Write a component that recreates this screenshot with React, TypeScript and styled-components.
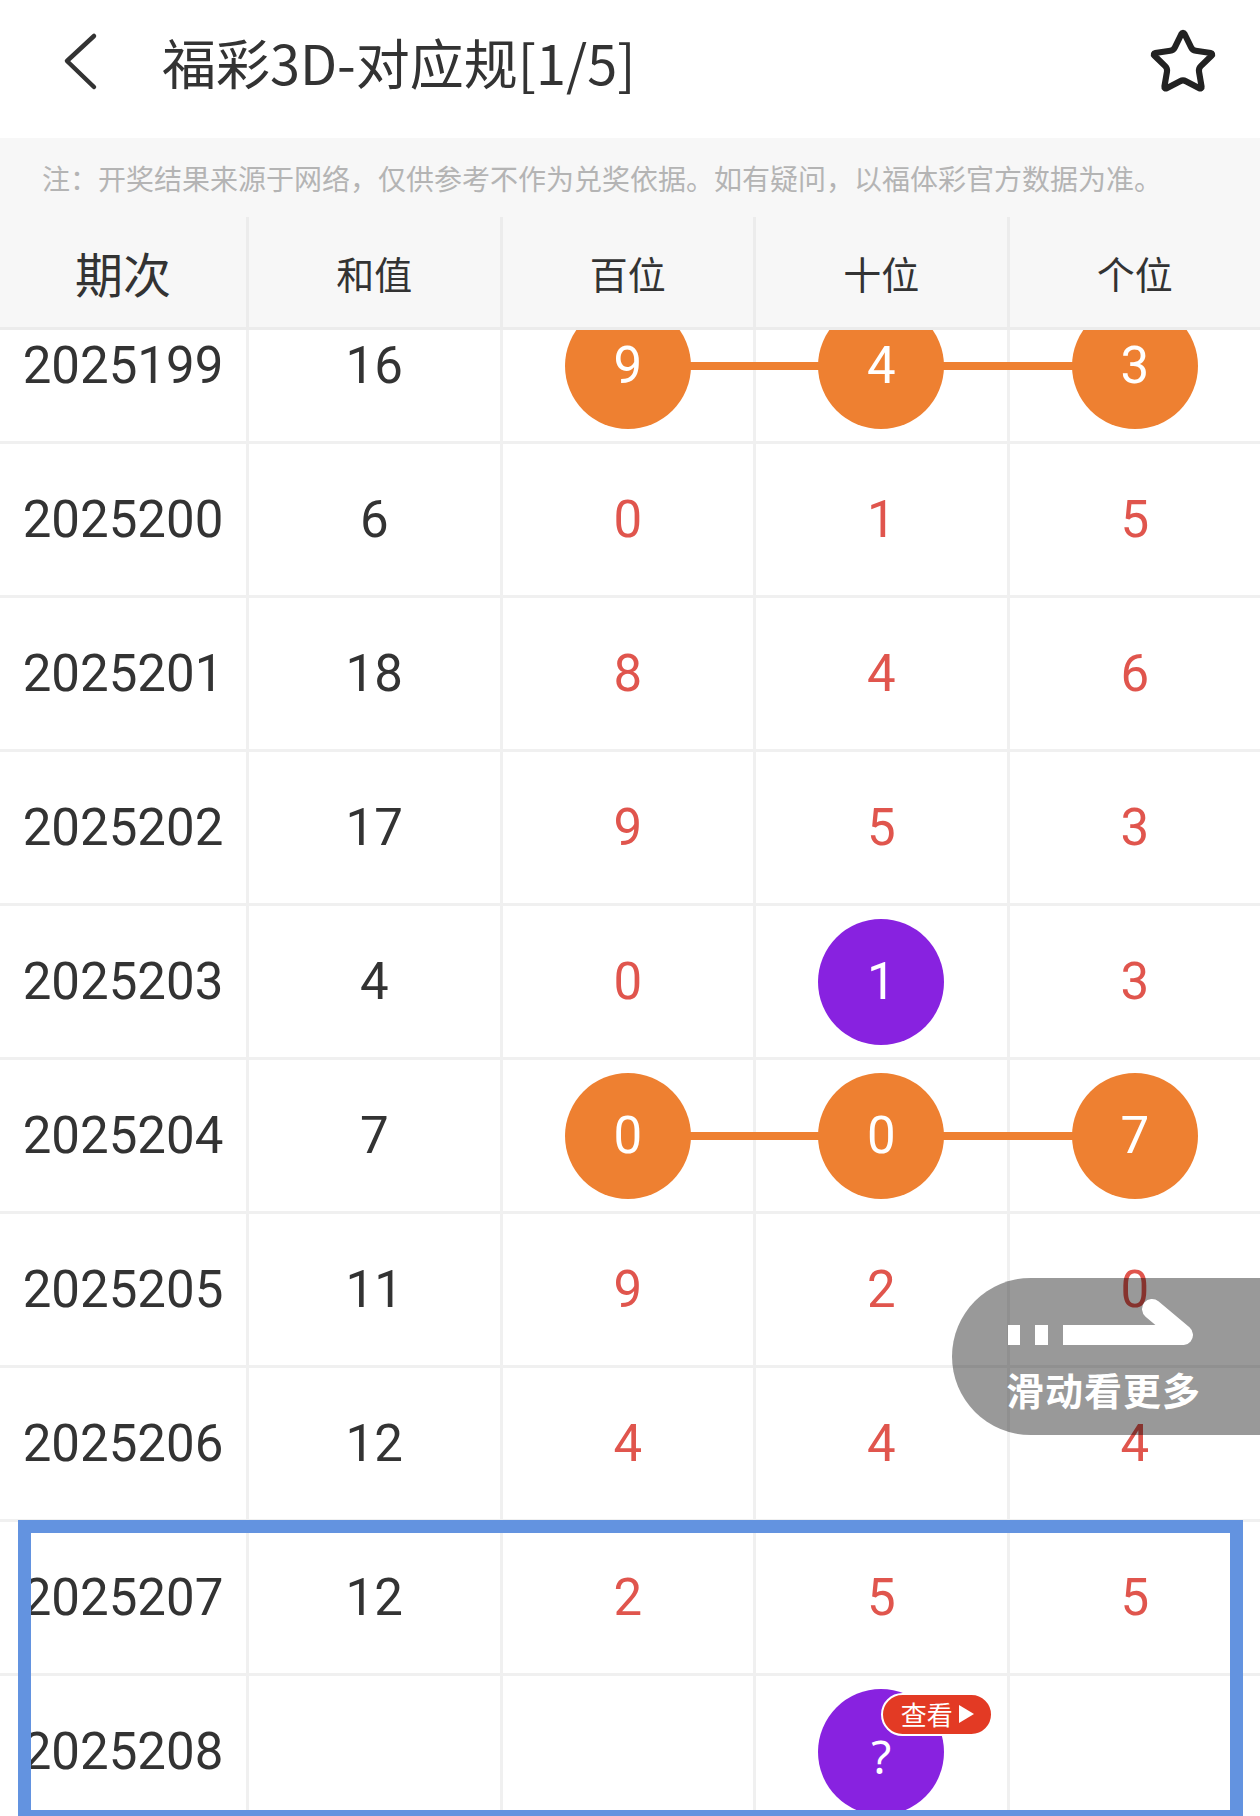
import React from "react";
import styled, { createGlobalStyle, css } from "styled-components";
import { Star } from "lucide-react";

const GlobalStyle = createGlobalStyle`
  html, body { margin: 0; padding: 0; background: #ffffff; }
  body { font-family: "Noto Sans CJK SC", "Noto Sans", sans-serif; }
  * { box-sizing: border-box; }
`;

const ORANGE = "#ee8031";
const PURPLE = "#8822e0";
const RED = "#e0554d";
const LINE = "#f0f0f0";

const Page = styled.div`
  width: 1260px;
  height: 1816px;
  overflow: hidden;
  background: #fff;
  display: flex;
  flex-direction: column;
`;

const NavBar = styled.header`
  height: 138px;
  flex: none;
  display: flex;
  align-items: center;
  padding: 0 42px 14px 62px;
  background: #fff;
`;

const BackButton = styled.button`
  border: 0;
  background: none;
  padding: 0;
  width: 40px;
  height: 62px;
  display: flex;
  color: #333;
`;

const Title = styled.h1`
  margin: 0 0 0 60px;
  font-family: "Noto Sans CJK SC", sans-serif;
  font-weight: 400;
  font-size: 54px;
  line-height: 1;
  color: #333;
  flex: 1;
`;

const StarButton = styled.button`
  border: 0;
  background: none;
  padding: 0;
  display: flex;
  color: #222;
`;

const GraySection = styled.div`
  background: #f7f7f7;
  flex: none;
`;

const Note = styled.p`
  margin: 0;
  height: 79px;
  display: flex;
  align-items: center;
  padding-left: 42px;
  font-size: 28px;
  color: #b4b4b4;
  white-space: nowrap;
`;

const gridCols = css`
  display: grid;
  grid-template-columns: 246px repeat(4, 1fr);
`;

const HeadRow = styled.div`
  ${gridCols};
  height: 113px;
  border-bottom: 3px solid #ececec;
`;

const HeadCell = styled.div<{ $big?: boolean }>`
  display: flex;
  align-items: center;
  justify-content: center;
  font-size: ${(p) => (p.$big ? "48px" : "38px")};
  color: #333;
  & + & {
    border-left: 3px solid #ececec;
  }
`;

const Body = styled.div`
  position: relative;
  flex: 1;
  overflow: hidden;
`;

const Rows = styled.div`
  margin-top: -40px;
`;

const Row = styled.div`
  ${gridCols};
  height: 154px;
  border-bottom: 3px solid ${LINE};
`;

type Link = "start" | "mid" | "end" | undefined;

const Cell = styled.div<{ $link?: Link }>`
  position: relative;
  display: flex;
  align-items: center;
  justify-content: center;
  font-family: Roboto, "Noto Sans", sans-serif;
  font-size: 51px;
  color: #333;
  & + & {
    border-left: 3px solid ${LINE};
  }
  ${(p) =>
    p.$link &&
    css`
      &::before {
        content: "";
        position: absolute;
        top: 50%;
        height: 8px;
        margin-top: -4px;
        background: ${ORANGE};
        left: ${p.$link === "start" ? "50%" : "-3px"};
        right: ${p.$link === "end" ? "50%" : "0"};
      }
    `}
`;

const Digit = styled.span`
  color: ${RED};
`;

const Ball = styled.span<{ $color: string }>`
  position: relative;
  z-index: 1;
  width: 126px;
  height: 126px;
  border-radius: 50%;
  background: ${(p) => p.$color};
  color: #fff;
  display: flex;
  align-items: center;
  justify-content: center;
  line-height: 1;
`;

const Question = styled.span`
  font-family: "Noto Sans", sans-serif;
  font-size: 46px;
  margin-top: 8px;
`;

const ViewBadge = styled.span`
  position: absolute;
  left: 63px;
  top: 4px;
  width: 112px;
  height: 43px;
  border-radius: 22px;
  border: 2px solid #fff;
  background: #e33a24;
  display: flex;
  align-items: center;
  justify-content: center;
  gap: 6px;
  font-family: "Noto Sans CJK SC", sans-serif;
  font-size: 26px;
  color: #fff;
`;

const Triangle = styled.span`
  width: 0;
  height: 0;
  border-top: 9px solid transparent;
  border-bottom: 9px solid transparent;
  border-left: 15px solid #fff;
`;

const HighlightGroup = styled.div`
  position: relative;
`;

const Frame = styled.div`
  position: absolute;
  top: -2px;
  left: 18px;
  right: 17px;
  bottom: 7px;
  border: 13px solid #6393e0;
  pointer-events: none;
  z-index: 3;
`;

const SwipeHint = styled.div`
  position: absolute;
  top: 948px;
  left: 952px;
  right: 0;
  height: 157px;
  border-radius: 79px 0 0 79px;
  background: rgba(0, 0, 0, 0.4);
  z-index: 4;
  display: flex;
  flex-direction: column;
  align-items: flex-start;
  padding: 18px 0 0 54px;
`;

const SwipeText = styled.span`
  margin-top: 24px;
  font-family: "Noto Sans CJK SC", sans-serif;
  font-weight: 700;
  font-size: 38px;
  line-height: 1;
  color: #fff;
  letter-spacing: 1px;
`;

type Pos = { v: string; kind?: "orange" | "purple" | "unknown" };
type RowData = { period: string; sum: string; digits: Pos[]; linked?: boolean };

const rows: RowData[] = [
  { period: "2025199", sum: "16", linked: true, digits: [{ v: "9", kind: "orange" }, { v: "4", kind: "orange" }, { v: "3", kind: "orange" }] },
  { period: "2025200", sum: "6", digits: [{ v: "0" }, { v: "1" }, { v: "5" }] },
  { period: "2025201", sum: "18", digits: [{ v: "8" }, { v: "4" }, { v: "6" }] },
  { period: "2025202", sum: "17", digits: [{ v: "9" }, { v: "5" }, { v: "3" }] },
  { period: "2025203", sum: "4", digits: [{ v: "0" }, { v: "1", kind: "purple" }, { v: "3" }] },
  { period: "2025204", sum: "7", linked: true, digits: [{ v: "0", kind: "orange" }, { v: "0", kind: "orange" }, { v: "7", kind: "orange" }] },
  { period: "2025205", sum: "11", digits: [{ v: "9" }, { v: "2" }, { v: "0" }] },
  { period: "2025206", sum: "12", digits: [{ v: "4" }, { v: "4" }, { v: "4" }] },
  { period: "2025207", sum: "12", digits: [{ v: "2" }, { v: "5" }, { v: "5" }] },
  { period: "2025208", sum: "", digits: [{ v: "" }, { v: "?", kind: "unknown" }, { v: "" }] },
];

const linkFor = (linked: boolean | undefined, i: number): Link =>
  linked ? (i === 0 ? "start" : i === 2 ? "end" : "mid") : undefined;

function DigitCell({ d, link }: { d: Pos; link: Link }) {
  let content: React.ReactNode = null;
  if (d.kind === "orange") content = <Ball $color={ORANGE}>{d.v}</Ball>;
  else if (d.kind === "purple") content = <Ball $color={PURPLE}>{d.v}</Ball>;
  else if (d.kind === "unknown")
    content = (
      <Ball $color={PURPLE}>
        <Question>?</Question>
        <ViewBadge>
          查看
          <Triangle />
        </ViewBadge>
      </Ball>
    );
  else if (d.v) content = <Digit>{d.v}</Digit>;
  return <Cell $link={link}>{content}</Cell>;
}

function DataRow({ r }: { r: RowData }) {
  return (
    <Row>
      <Cell>{r.period}</Cell>
      <Cell>{r.sum}</Cell>
      {r.digits.map((d, i) => (
        <DigitCell key={i} d={d} link={linkFor(r.linked, i)} />
      ))}
    </Row>
  );
}

function SwipeIcon() {
  return (
    <svg width="200" height="50" viewBox="0 0 200 50" fill="#fff">
      <rect x="2" y="29" width="12" height="20" />
      <rect x="29" y="29" width="13" height="20" />
      <rect x="57" y="29" width="121" height="20" />
      <path d="M177 39 L146 13" stroke="#fff" strokeWidth="20" strokeLinecap="round" />
    </svg>
  );
}

export default function App() {
  const top = rows.slice(0, 8);
  const bottom = rows.slice(8);
  return (
    <>
      <GlobalStyle />
      <Page>
        <NavBar>
          <BackButton aria-label="返回">
            <svg width="40" height="62" viewBox="0 0 40 62" fill="none">
              <path d="M32 5 L5 30 L32 56" stroke="#333" strokeWidth="4.5" strokeLinecap="round" strokeLinejoin="round" />
            </svg>
          </BackButton>
          <Title>福彩3D-对应规[1/5]</Title>
          <StarButton aria-label="收藏">
            <Star size={70} strokeWidth={2.1} />
          </StarButton>
        </NavBar>
        <GraySection>
          <Note>注：开奖结果来源于网络，仅供参考不作为兑奖依据。如有疑问，以福体彩官方数据为准。</Note>
          <HeadRow>
            <HeadCell $big>期次</HeadCell>
            <HeadCell>和值</HeadCell>
            <HeadCell>百位</HeadCell>
            <HeadCell>十位</HeadCell>
            <HeadCell>个位</HeadCell>
          </HeadRow>
        </GraySection>
        <Body>
          <Rows>
            {top.map((r) => (
              <DataRow key={r.period} r={r} />
            ))}
            <HighlightGroup>
              {bottom.map((r) => (
                <DataRow key={r.period} r={r} />
              ))}
              <Frame />
            </HighlightGroup>
          </Rows>
          <SwipeHint>
            <SwipeIcon />
            <SwipeText>滑动看更多</SwipeText>
          </SwipeHint>
        </Body>
      </Page>
    </>
  );
}
